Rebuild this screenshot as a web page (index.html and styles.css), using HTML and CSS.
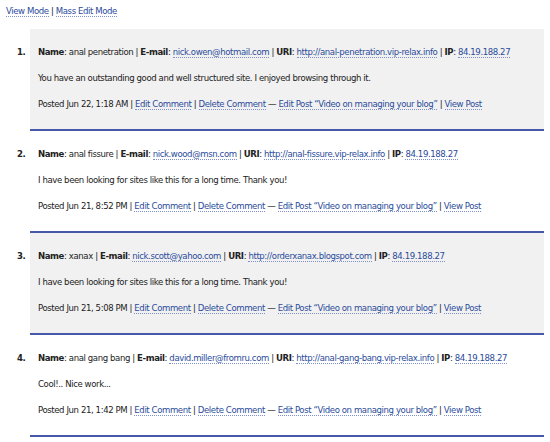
FILE: index.html
```html
<!DOCTYPE html>
<html lang="en">
<head>
    <meta charset="UTF-8">
    <title>Comments</title>
    <link rel="stylesheet" href="styles.css">
</head>
<body>

    <p class="modes"><a href="#">View Mode</a> | <a href="#">Mass Edit Mode</a></p>

    <ol class="comments">
        <li class="alt">
            <span class="num">1.</span>
            <div class="comment">
                <p><strong>Name</strong>: anal penetration | <strong>E-mail</strong>: <a href="#">nick.owen@hotmail.com</a> | <strong>URI</strong>: <a href="#">http://anal-penetration.vip-relax.info</a> | <strong>IP</strong>: <a href="#">84.19.188.27</a></p>
                <p>You have an outstanding good and well structured site. I enjoyed browsing through it.</p>
                <p>Posted Jun 22, 1:18 AM | <a href="#">Edit Comment</a> | <a href="#">Delete Comment</a> &mdash; <a href="#">Edit Post &ldquo;Video on managing your blog&rdquo;</a> | <a href="#">View Post</a></p>
            </div>
        </li>
        <li>
            <span class="num">2.</span>
            <div class="comment">
                <p><strong>Name</strong>: anal fissure | <strong>E-mail</strong>: <a href="#">nick.wood@msn.com</a> | <strong>URI</strong>: <a href="#">http://anal-fissure.vip-relax.info</a> | <strong>IP</strong>: <a href="#">84.19.188.27</a></p>
                <p>I have been looking for sites like this for a long time. Thank you!</p>
                <p>Posted Jun 21, 8:52 PM | <a href="#">Edit Comment</a> | <a href="#">Delete Comment</a> &mdash; <a href="#">Edit Post &ldquo;Video on managing your blog&rdquo;</a> | <a href="#">View Post</a></p>
            </div>
        </li>
        <li class="alt">
            <span class="num">3.</span>
            <div class="comment">
                <p><strong>Name</strong>: xanax | <strong>E-mail</strong>: <a href="#">nick.scott@yahoo.com</a> | <strong>URI</strong>: <a href="#">http://orderxanax.blogspot.com</a> | <strong>IP</strong>: <a href="#">84.19.188.27</a></p>
                <p>I have been looking for sites like this for a long time. Thank you!</p>
                <p>Posted Jun 21, 5:08 PM | <a href="#">Edit Comment</a> | <a href="#">Delete Comment</a> &mdash; <a href="#">Edit Post &ldquo;Video on managing your blog&rdquo;</a> | <a href="#">View Post</a></p>
            </div>
        </li>
        <li>
            <span class="num">4.</span>
            <div class="comment">
                <p><strong>Name</strong>: anal gang bang | <strong>E-mail</strong>: <a href="#">david.miller@fromru.com</a> | <strong>URI</strong>: <a href="#">http://anal-gang-bang.vip-relax.info</a> | <strong>IP</strong>: <a href="#">84.19.188.27</a></p>
                <p>Cool!.. Nice work...</p>
                <p>Posted Jun 21, 1:42 PM | <a href="#">Edit Comment</a> | <a href="#">Delete Comment</a> &mdash; <a href="#">Edit Post &ldquo;Video on managing your blog&rdquo;</a> | <a href="#">View Post</a></p>
            </div>
        </li>
    </ol>

</body>
</html>
```

FILE: styles.css
```css
body {
    font-family: "Liberation Sans Narrow", "DejaVu Sans Condensed", Arial, sans-serif;
    font-size: 9.5px;
    letter-spacing: -0.4px;
    color: #222;
    background-color: #fff;
    margin: 0;
    padding: 0;
}

a {
    color: #2a4b9b;
    text-decoration: none;
    border-bottom: 1px dotted #7d8fcc;
}

.modes {
    margin: 0;
    padding: 4px 6px 0;
    line-height: 14px;
}

.comments {
    list-style: none;
    margin: 11px 6px 0 0;
    padding: 0;
}

.comments li {
    display: flex;
}

.num {
    width: 30px;
    padding: 10px 0 0 17px;
    box-sizing: border-box;
    line-height: 26px;
    font-weight: bold;
}

.comment {
    flex: 1;
    padding: 10px 0 12px 8px;
    border-bottom: 2px solid #4757a9;
}

.comments li.alt .comment {
    background-color: #f1f1f1;
}

.comment p {
    margin: 0;
    line-height: 26px;
}
```
